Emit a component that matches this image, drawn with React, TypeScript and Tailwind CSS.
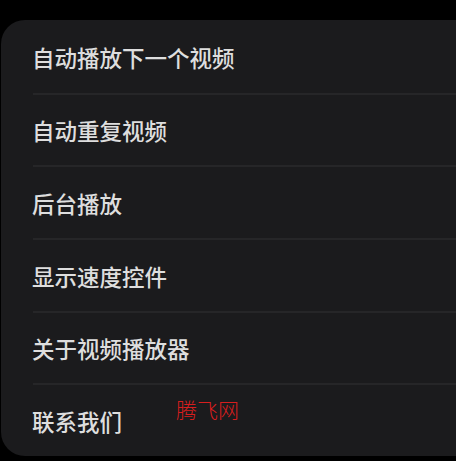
import React from "react";

const items = [
  "自动播放下一个视频",
  "自动重复视频",
  "后台播放",
  "显示速度控件",
  "关于视频播放器",
  "联系我们",
];

export default function App() {
  return (
    <div className="w-[456px] h-[461px] bg-black pt-[20px] pl-[1px] overflow-hidden">
      <div className="relative h-[436px] bg-[#1b1b1d] rounded-l-[24px] flex flex-col">
        {items.map((t, i) => (
          <div key={t} className="flex flex-col flex-1">
            {i > 0 && <div className="ml-[32px] h-[2px] bg-[#262628]" />}
            <div
              className="flex-1 flex items-center pl-[31px] pt-[1px] text-[22.5px] leading-none text-[#dedede] font-medium"
              style={{ fontFamily: '"Noto Sans CJK SC", "Noto Sans", sans-serif' }}
            >
              {t}
            </div>
          </div>
        ))}
        <div
          className="absolute left-[175px] top-[379px] text-[21px] leading-none text-[#d81e1e] font-light"
          style={{ fontFamily: '"Noto Sans CJK SC", sans-serif' }}
        >
          腾飞网
        </div>
      </div>
    </div>
  );
}
